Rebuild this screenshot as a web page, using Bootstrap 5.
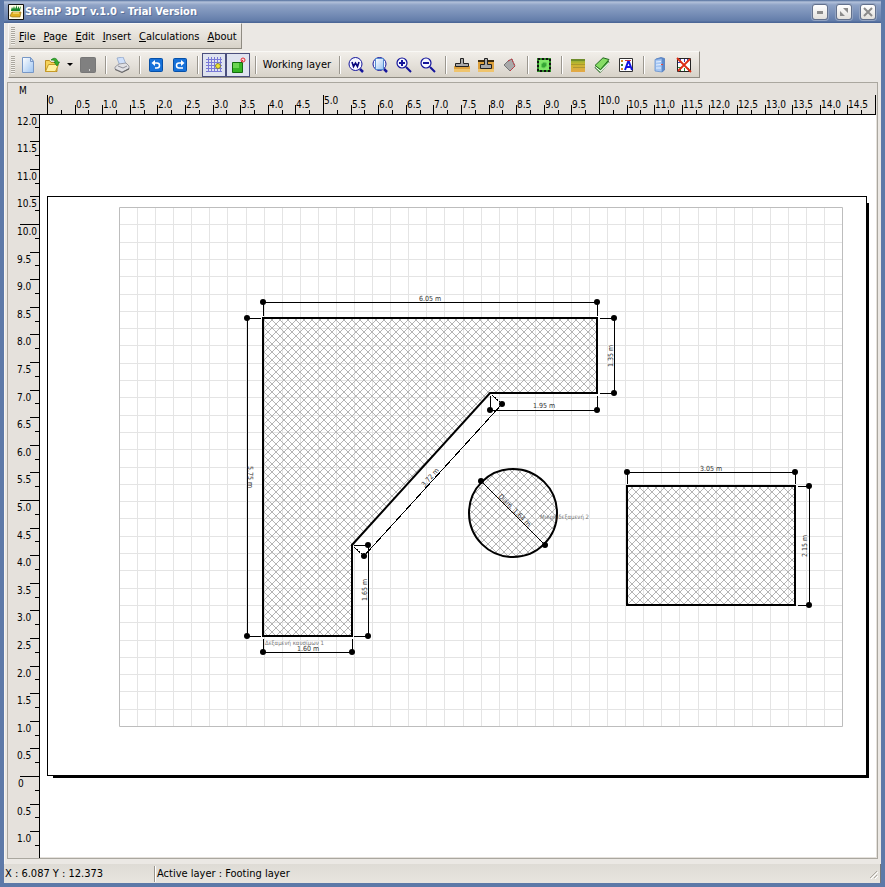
<!DOCTYPE html>
<html lang="en">
<head>
<meta charset="utf-8">
<meta name="viewport" content="width=device-width, initial-scale=1">
<title>SteinP 3DT v.1.0 - Trial Version</title>
<link rel="stylesheet" href="https://cdn.jsdelivr.net/npm/bootstrap@5.3.0/dist/css/bootstrap.min.css">
<style>
  body { font-family: "DejaVu Sans Condensed", "DejaVu Sans", sans-serif; font-size: 11px; line-height: 16px; color: #000; background: #4b6795; }
  .app-window { border: solid #5d79a8; border-width: 0 4px 4px; background: #ebe8e4; box-shadow: inset 1px 0 #f6f4f0; }
  .title-bar { height: 23px; margin: 0 -4px; padding: 0 9px 0 8px; background: linear-gradient(#4f6c9b 0, #b3c1da 2px, #8fa3c6 5px, #7189b3 16px, #627ca9 21px, #4c6797 22px); color: #fff; gap: 1px; }
  .title-bar h1 { font-size: 11px; line-height: 16px; font-weight: 700; text-shadow: 1px 1px #5b7099; }
  .win-btn { width: 16px; height: 16px; border: 1px solid #63718c; border-radius: 3px; background: linear-gradient(#fff, #e2e0dc); box-shadow: 0 0 0 1px #93a4c2; }
  .win-btns { gap: 8px; }
  .strip { align-self: flex-start; margin-left: 4px; border: 1px solid; border-color: #f9f8f5 #8f8b82 #8f8b82 #f9f8f5; background: linear-gradient(#f1eee9, #e5e1da 50%, #d7d2c8); }
  .menu-strip { height: 26px; margin-bottom: 2px; }
  .tool-strip { height: 27px; margin-bottom: 4px; padding-right: 3px; }
  .grip { width: 4px; height: 18px; margin: 0 1px 0 2px; background: repeating-linear-gradient(#aaa69e 0 1px, #f2f0eb 1px 2px); }
  .menu-strip .grip { margin-right: 0; }
  .flat-btn { border: 1px solid transparent; background: none; padding: 0; color: #000; }
  .menu-btn { padding: 1px 3px 0; height: 20px; }
  .tool-btn { width: 24px; height: 24px; }
  .drop-btn { width: 12px; height: 24px; }
  .drop-btn svg { position: relative; }
  .layer-btn { width: 74px; height: 24px; white-space: nowrap; }
  .pressed { border-color: #4b4f7d; background: #dfe3ef; }
  .divider { width: 10px; height: 18px; background: linear-gradient(90deg, transparent 5px, #9b978f 5px 6px, #fff 6px 7px, transparent 7px); }
  .workspace { display: grid; grid-template: 32px minmax(0, 1fr) / 32px minmax(0, 1fr); margin: 0 3px 5px 3px; border: 1px solid #aaa79f; background: #e5e1dc; min-height: 0; }
  .unit { padding: 0 0 0 11px; font-size: 10px; }
  .sheet { background: #fff; margin-right: 1px; margin-bottom: 1px; }
  svg { display: block; }
  .rule text { font-size: 10px; }
  .rule svg { overflow: visible; }
  .ink { stroke: #000; fill: none; shape-rendering: crispEdges; }
  .dim-text text { font-size: 7px; fill: #333; text-anchor: middle; }
  .tank-names text { font-size: 6px; fill: #777; }
  .status { height: 19px; background: linear-gradient(#dedbd5, #e8e5df); border-right: 1px solid #777; }
  .status-pos { width: 151px; padding-left: 1px; border-right: 1px solid #99958d; }
  .status-layer { padding-left: 1px; border-left: 1px solid #fff; }
</style>
<script src="https://cdn.jsdelivr.net/npm/bootstrap@5.3.0/dist/js/bootstrap.bundle.min.js"></script>
</head>
<body>
<div class="app-window d-flex flex-column vh-100 overflow-hidden">
  <header class="title-bar d-flex align-items-center flex-shrink-0">
    <svg width="16" height="16" viewBox="0 0 16 16" aria-hidden="true"><path fill="#fffbe6" stroke="#111" d="M.5.5h15v15H.5z"/><path fill="#16852a" d="M3 6l1-3 1 2 1-3 1 3 2-4v4l2-3v3l2-3-1 5H3z"/><path fill="#e0af20" stroke="#8b6510" stroke-width=".6" d="M2 12l2-4h9l-1 5H4z"/><path stroke="#fff2a0" d="M5 9h6"/></svg>
    <h1 class="m-0 flex-grow-1">SteinP 3DT v.1.0 - Trial Version</h1>
    <div class="win-btns d-flex">
      <button class="win-btn p-0" aria-label="Minimize"><svg width="14" height="14"><path fill="#8b8b8b" d="M4 6h6v3H4z"/></svg></button>
      <button class="win-btn p-0" aria-label="Restore"><svg width="14" height="14"><path fill="#8b8b8b" d="M6 3h5v5zM3 6v5h5z"/></svg></button>
      <button class="win-btn p-0" aria-label="Close"><svg width="14" height="14"><path stroke="#8b8b8b" stroke-width="2" d="M3 3l8 8M11 3l-8 8"/></svg></button>
    </div>
  </header>

  <nav class="strip menu-strip d-flex align-items-center flex-shrink-0" aria-label="Main menu">
    <span class="grip"></span>
    <button class="flat-btn menu-btn"><u>F</u>ile</button>
    <button class="flat-btn menu-btn"><u>P</u>age</button>
    <button class="flat-btn menu-btn"><u>E</u>dit</button>
    <button class="flat-btn menu-btn"><u>I</u>nsert</button>
    <button class="flat-btn menu-btn"><u>C</u>alculations</button>
    <button class="flat-btn menu-btn"><u>A</u>bout</button>
  </nav>

  <div class="strip tool-strip d-flex align-items-center flex-shrink-0" role="toolbar" aria-label="Tools">
    <span class="grip"></span>
    <button class="flat-btn tool-btn" aria-label="New"><svg class="m-auto" width="16" height="16"><defs><linearGradient id="pg" x2="1" y2="1"><stop stop-color="#fff"/><stop offset="1" stop-color="#9cc4f2"/></linearGradient></defs><path fill="url(#pg)" stroke="#7797c6" d="M2.500.5h8l3 4v11h-11z"/><path fill="#cfe2fa" stroke="#7797c6" d="M10.500.5v4h3z"/></svg></button>
    <button class="flat-btn tool-btn" aria-label="Open"><svg class="m-auto" width="16" height="16"><path fill="#f5d35a" stroke="#bd8f22" d="M1.500 14.500v-11h4l1.500 2h6v9z"/><path fill="#fff0a0" stroke="#c69a26" d="M1.500 14.500l3-7h10l-3 7z"/><path fill="#38ad2f" stroke="#197b18" stroke-width=".7" d="M7 3c3-3 6-2 7 2h1.500L13 9l-3-4h1.500C11 3 9 3 7 3z"/></svg></button>
    <button class="flat-btn drop-btn" aria-label="Open recent"><svg class="m-auto" width="7" height="4"><path d="M0 0h6L3 3z"/></svg></button>
    <button class="flat-btn tool-btn" aria-label="Save"><svg class="m-auto" width="16" height="16"><rect x=".5" y=".5" width="15" height="15" rx="1" fill="#808080" stroke="#777"/><path fill="#ccc" d="M9 12h1v2H9z"/></svg></button>
    <span class="divider"></span>
    <button class="flat-btn tool-btn" aria-label="Print"><svg class="m-auto" width="16" height="16"><path fill="#cfe0fb" stroke="#8ea5c8" stroke-width=".8" d="M3 1l6-1 3 7-6 2z"/><path fill="#e1e1e4" stroke="#8b8b94" stroke-width=".8" d="M1 10l4-3 7-1 3 3v3l-7 3-7-3z"/><path fill="#666" d="M1 12l7 3 7-4v1.500L8 16l-7-3z"/><path stroke="#8f8f98" d="M4 9l5 2 4-2" fill="none"/></svg></button>
    <span class="divider"></span>
    <button class="flat-btn tool-btn" aria-label="Undo"><svg class="m-auto" width="16" height="16"><rect x="1.500" y="1.500" width="13" height="13" rx="1" fill="#1671d9" stroke="#0750a7"/><path fill="none" stroke="#fff" stroke-width="1.500" d="M5 6h4q2.500 0 2.500 2.500T9 11H7"/><path fill="#fff" d="M3.500 6L7 3v6z"/></svg></button>
    <button class="flat-btn tool-btn" aria-label="Redo"><svg class="m-auto" width="16" height="16"><rect x="1.500" y="1.500" width="13" height="13" rx="1" fill="#1671d9" stroke="#0750a7"/><path fill="none" stroke="#fff" stroke-width="1.500" d="M10 6H7Q4.500 6 4.500 8.500T7 11h4"/><path fill="#fff" d="M12.500 6L9 3v6z"/></svg></button>
    <span class="divider"></span>
    <button class="flat-btn tool-btn pressed" aria-label="Show grid" aria-pressed="true"><svg class="m-auto" width="16" height="16"><path stroke="#7a7ad8" d="M2.500 0v15M5.500 0v15M8.500 0v15M11.500 0v15M14.500 0v15M0 2.500h16M0 5.500h16M0 8.500h16M0 11.500h16M0 14.500h16"/><circle cx="12" cy="9" r="2.500" fill="#eee330" stroke="#77712d" stroke-width=".8"/></svg></button>
    <button class="flat-btn tool-btn pressed" aria-label="Snap" aria-pressed="true"><svg class="m-auto" width="16" height="16"><path fill="#35b524" stroke="#126b0d" d="M2.500 5.500h10v10h-10z"/><path fill="#6ad552" d="M3 6h6v5H3z"/><circle cx="13" cy="3" r="2" fill="#fbd9d9" stroke="#e12d35"/><path stroke="#e12d35" d="M11 5l2-2"/></svg></button>
    <span class="divider"></span>
    <button class="flat-btn layer-btn">Working layer</button>
    <span class="divider"></span>
    <button class="flat-btn tool-btn" aria-label="Zoom window"><svg class="m-auto" width="16" height="16"><circle cx="7.500" cy="7" r="6.500" fill="#f5f8ff" stroke="#15159b"/><path stroke="#15159b" stroke-width="2.500" d="M12 12l3 3"/><path fill="none" stroke="#08087d" stroke-width="1.600" d="M4 5l1.500 4.500L7.500 6l2 3.500L11 5"/></svg></button>
    <button class="flat-btn tool-btn" aria-label="Zoom page"><svg class="m-auto" width="16" height="16"><circle cx="7.500" cy="7" r="6.500" fill="#f5f8ff" stroke="#15159b"/><path stroke="#15159b" stroke-width="2.500" d="M12 12l3 3"/><path fill="url(#pg)" stroke="#568bd0" d="M3.500 1.500h8v11h-8z"/></svg></button>
    <button class="flat-btn tool-btn" aria-label="Zoom in"><svg class="m-auto" width="16" height="16"><circle cx="6" cy="6" r="5" fill="#f5f8ff" stroke="#15159b" stroke-width="1.200"/><path stroke="#15159b" stroke-width="2" d="M10 10l5 5M6 3v6M3 6h6"/></svg></button>
    <button class="flat-btn tool-btn" aria-label="Zoom out"><svg class="m-auto" width="16" height="16"><circle cx="6" cy="6" r="5" fill="#f5f8ff" stroke="#15159b" stroke-width="1.200"/><path stroke="#15159b" stroke-width="2" d="M10 10l5 5M3 6h6"/></svg></button>
    <span class="divider"></span>
    <button class="flat-btn tool-btn" aria-label="Footing"><svg class="m-auto" width="16" height="16"><path fill="#dda13c" d="M0 9h16v4H0z"/><path fill="#efc46d" d="M0 12h16v3H0z"/><path fill="#aaa" stroke="#222" d="M6.500 1.500h3v5h5v3h-13v-3h5z"/></svg></button>
    <button class="flat-btn tool-btn" aria-label="Buried footing"><svg class="m-auto" width="16" height="16"><path fill="#dda13c" d="M0 4h16v9H0z"/><path fill="#efc46d" d="M0 12h16v3H0z"/><path d="M0 3h16v2H0z" fill="#3b2a0e"/><path fill="#aaa" stroke="#222" d="M6.500 1.500h3v6h4v4h-11v-4h4z"/></svg></button>
    <button class="flat-btn tool-btn" aria-label="Polygon"><svg class="m-auto" width="16" height="16"><path fill="#a9a9a9" stroke="#777" d="M2 8l4-4 4-2 1 3 2 4-5 5z"/><path fill="none" stroke="#cc303b" stroke-dasharray="2 1" d="M6 4l4-2 1 3 2 4-5 5"/></svg></button>
    <span class="divider"></span>
    <button class="flat-btn tool-btn" aria-label="Area"><svg class="m-auto" width="16" height="16"><path fill="#7fe668" stroke="#2d8a25" stroke-width="2" d="M2 2h12v12H2z"/><path fill="none" stroke="#111" stroke-width="2" stroke-dasharray="2 2" d="M2 2h12v12H2z"/><path fill="#35a535" stroke="#5cc94f" d="M5.500 7l2-1.500 3 .5v3l-2.500 2-2.500-1z"/></svg></button>
    <span class="divider"></span>
    <button class="flat-btn tool-btn" aria-label="Soil layers"><svg class="m-auto" width="16" height="16"><defs><linearGradient id="soil" x2="0" y2="1"><stop stop-color="#7cae3b"/><stop offset=".4" stop-color="#c9b62d"/><stop offset="1" stop-color="#e5a849"/></linearGradient></defs><path fill="url(#soil)" d="M1 2h14v13H1z"/><path fill="#6f8c2b" d="M1 2h14v2H1z"/><path stroke="#8a7d2d" d="M1 7.500h14M3 10.500h12" opacity=".5"/></svg></button>
    <button class="flat-btn tool-btn" aria-label="Surface layers"><svg class="m-auto" width="16" height="16"><path fill="#42a737" stroke="#1c5918" d="M1 10.500l5 5 9-9.500-1-2z"/><path fill="#fff" d="M1.500 9l5 4.500L15 5v1.500L6.500 15l-5-4.500z"/><path fill="#86dc65" stroke="#246821" d="M1 8.500L9 .8l6 1.700-8.500 10z"/></svg></button>
    <button class="flat-btn tool-btn" aria-label="Legend"><svg class="m-auto" width="16" height="16"><path fill="#fff" stroke="#333" d="M1.500 1.500h13v13h-13z"/><path stroke="#c34" d="M7 3.500h6"/><path stroke="#db8b22" stroke-width="2" d="M3 4h2M3 12h2"/><path stroke="#373" stroke-width="2" d="M3 8h2"/><path fill="none" stroke="#1212e0" stroke-width="2" d="M7 13l3-8h1l3 8M8 10h4"/></svg></button>
    <span class="divider"></span>
    <button class="flat-btn tool-btn" aria-label="Report"><svg class="m-auto" width="16" height="16"><path fill="#5d8bca" stroke="#507abd" stroke-width=".8" d="M4 2l5-1.500 3.500 1V13L10 15z"/><path fill="#a5c6f3" stroke="#6690cd" stroke-width=".8" d="M3 2.500l7-1V15l-7-1z"/><path stroke="#e6f1ff" d="M4 5l5-.5M4 8l5-.5M4 11h5"/><path fill="#e43" d="M9 7h2v1H9z"/></svg></button>
    <button class="flat-btn tool-btn" aria-label="Clear results"><svg class="m-auto" width="16" height="16"><path fill="#fff" stroke="#222" d="M1.500 1.500h13v13h-13z"/><path stroke="#3c3cb0" d="M4.500 2v3M8.500 2v3M11.500 2v3M2 5.500h3"/><path stroke="#288b3a" d="M4.500 14v-3M8.500 14v-3M12.500 14v-3M2 10.500h3"/><path stroke="#dd2e14" stroke-width="1.800" d="M1 1l14 14M14 2L2 14"/></svg></button>
  </div>

  <main class="workspace flex-grow-1">
    <div class="unit">M</div>
    <div class="rule">
      <svg width="100%" height="32" aria-label="Horizontal ruler"><g id="ruler-x" transform="translate(-40 -83)"></g></svg>
    </div>
    <div class="rule">
      <svg width="32" height="100%" aria-label="Vertical ruler"><g id="ruler-y" transform="translate(-8 -115)"></g></svg>
    </div>
    <div class="sheet overflow-hidden">
      <svg width="100%" height="100%" role="img" aria-label="Foundation plan">
        <defs>
          <pattern id="hatch" width="8" height="8" patternUnits="userSpaceOnUse"><path d="M0 0l8 8M8 0L0 8" stroke="#b4b4b4" shape-rendering="crispEdges"/></pattern>
        </defs>
        <g transform="translate(-40 -115)">
          <path d="M866 203h3v575H53v-3h813z"/>
          <path class="ink" d="M47.500 196.500h819v579h-819z"/>
          <path id="grid-lines" fill="none" stroke="#e4e4e4" shape-rendering="crispEdges"/>
          <path fill="none" stroke="#bdbdbd" d="M119.500 207.500h723v519h-723z"/>
          <g fill="url(#hatch)" stroke="#000" stroke-width="2">
            <path d="M263 318H597V393H490L352 545V636H263z"/>
            <circle cx="513" cy="513" r="44"/>
            <path d="M627 486H795V605H627z"/>
          </g>
          <path class="ink" d="M263.500 316v-13.500H597.500v13.500M261 318.500h-13.500V636.500h13.500M600 318.500h14.500V393.500H600M490.500 396v14.500H597.500V396M263.500 639v13.500H352.500V639M354 545.500h14.500V636.500H354M627.500 484v-11.500H795.500v11.500M798 486.500h11.500V605.500H798M502 404L364 556M481 481l64 64"/>
          <path class="ink" stroke-dasharray="2 1" d="M490 393l12 11M352 545l12 11"/>
          <g id="dim-dots"></g>
          <g class="dim-text">
            <text x="430" y="301">6.05 m</text>
            <text x="544" y="408">1.95 m</text>
            <text x="308" y="651">1.60 m</text>
            <text x="711" y="471">3.05 m</text>
            <text transform="translate(248 477) rotate(90)">5.75 m</text>
            <text transform="translate(613 356) rotate(-90)">1.35 m</text>
            <text transform="translate(367 590) rotate(-90)">1.65 m</text>
            <text transform="translate(807 546) rotate(-90)">2.15 m</text>
            <text transform="translate(432 479) rotate(-48)">3.72 m</text>
            <text transform="translate(513 512) rotate(45)">Diam. 1.64 m</text>
          </g>
          <g class="tank-names">
            <text x="265" y="645">Δεξαμενή καυσίμων 1</text>
            <text x="540" y="519">Μικρή δεξαμενή 2</text>
          </g>
        </g>
      </svg>
    </div>
  </main>

  <footer class="status d-flex align-items-center flex-shrink-0">
    <div class="status-pos">X : 6.087 Y : 12.373</div>
    <div class="status-layer flex-grow-1">Active layer : Footing layer</div>
    <svg width="12" height="12" aria-hidden="true"><path stroke="#aaa69e" d="M2 10l7-7M6 10l3-3"/><path stroke="#fff" d="M3 11l7-7M7 11l3-3"/></svg>
  </footer>
</div>
<script>
  const metre = 55.2;
  const label = v => v ? v.toFixed(1) : "0";
  const px = v => Math.floor(v) + 0.5;

  // Horizontal ruler: a tick each quarter metre, a label each half metre.
  let ticks = "M40 114.5H876M875.5 95V114", texts = "";
  for (let i = 0; i < 60; i++) {
    const x = px(47.5 + i * metre / 4), major = i % 20 === 0, half = i % 2 === 0;
    ticks += `M${x} ${major ? 95 : half ? 105 : 110}V114`;
    if (half) texts += `<text x="${x + 0.5}" y="${major ? 104 : 108}">${label(i / 4)}</text>`;
  }
  document.getElementById("ruler-x").innerHTML = `<path class="ink" d="${ticks}"/>${texts}`;

  // Vertical ruler: 12 m at the top, counting up again below zero.
  ticks = "M39.5 114V858"; texts = "";
  for (let i = 0; i <= 53; i++) {
    const q = 48 - i, y = px(114 + i * metre / 4), major = q % 20 === 0, half = q % 2 === 0;
    ticks += `M${major ? 20 : half ? 30 : 35} ${y}H39`;
    if (half) texts += `<text x="${q ? 17 : 18}" y="${y + 10.5}">${label(Math.abs(q) / 4)}</text>`;
  }
  document.getElementById("ruler-y").innerHTML = `<path class="ink" d="${ticks}"/>${texts}`;

  let grid = "";
  for (let i = 1; i < 40; i++) grid += `M${px(119.5 + i * 18.08)} 208V726`;
  for (let i = 1; i < 30; i++) grid += `M120 ${px(207.5 + i * 17.3)}H842`;
  document.getElementById("grid-lines").setAttribute("d", grid);

  const dots = [[263,302],[597,302],[247,318],[247,636],[614,318],[614,393],[490,410],[597,410],[502,404],[364,556],
    [368,545],[368,636],[263,652],[352,652],[481,481],[545,545],[627,472],[795,472],[809,486],[809,605]];
  document.getElementById("dim-dots").innerHTML = dots.map(([x, y]) => `<circle cx="${x}" cy="${y}" r="3"/>`).join("");
</script>
</body>
</html>
